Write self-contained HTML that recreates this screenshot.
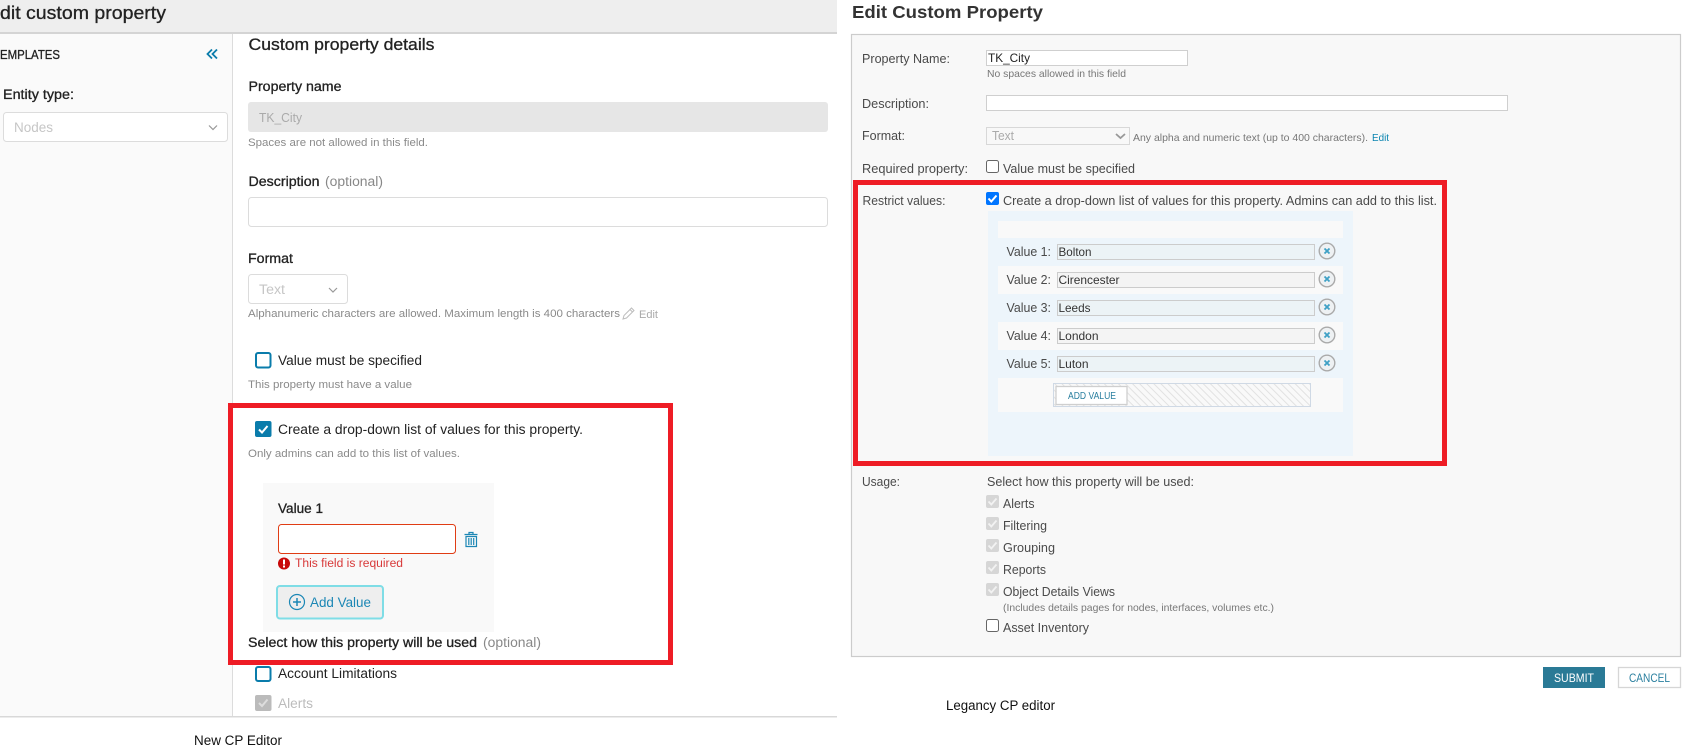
<!DOCTYPE html>
<html lang="en">
<head>
<meta charset="utf-8">
<title>Custom property editors</title>
<style>
html,body{margin:0;padding:0;background:#fff;width:1700px;height:756px;overflow:hidden}
svg{display:block}
text{font-family:"Liberation Sans",sans-serif;white-space:pre}
.b{stroke:currentColor;stroke-width:.3}
.l{font-size:13.5px;fill:#222;color:#222}
.h{font-size:11px;fill:#8a8a8a}
.r{font-size:12.5px;fill:#4a4a4a}
.s{font-size:10.5px;fill:#777}
</style>
</head>
<body>
<svg width="1700" height="756" viewBox="0 0 1700 756" xmlns="http://www.w3.org/2000/svg">
<defs>
<pattern id="hatch" width="5" height="5" patternUnits="userSpaceOnUse" patternTransform="rotate(45)">
<rect width="5" height="5" fill="#f9f9f9"/><rect width="5" height="1" fill="#e2e2e2"/>
</pattern>
</defs>
<rect width="1700" height="756" fill="#fff"/>

<!-- LEFT: new editor -->
<rect x="0" y="0" width="837" height="33" fill="#eeeeee"/>
<rect x="0" y="32" width="837" height="2" fill="#d4d4d4"/>
<rect x="0" y="34" width="232" height="682" fill="#fafafa"/>
<rect x="232" y="34" width="1" height="682" fill="#dcdcdc"/>
<rect x="0" y="716" width="837" height="1.5" fill="#d8d8d8"/>

<text x="0" y="19" font-size="18.5" fill="#222" color="#222" class="b" textLength="166" lengthAdjust="spacingAndGlyphs">dit custom property</text>
<text x="0" y="59" font-size="12.5" fill="#222" color="#222" class="b" textLength="60" lengthAdjust="spacingAndGlyphs">EMPLATES</text>
<path d="M212 49.500l-4.500 4.500 4.500 4.500M217 49.500l-4.500 4.500 4.500 4.500" fill="none" stroke="#0a7cab" stroke-width="1.800"/>
<text x="3" y="99" class="l b" textLength="71" lengthAdjust="spacingAndGlyphs">Entity type:</text>
<rect x="3.500" y="112.500" width="224" height="29" rx="3" fill="#fff" stroke="#dcdcdc"/>
<text x="14" y="132" font-size="13.500" fill="#c6c6c6" textLength="39" lengthAdjust="spacingAndGlyphs">Nodes</text>
<path d="M209 125.500l4 4 4-4" fill="none" stroke="#999" stroke-width="1.200"/>

<text x="248.500" y="50" font-size="17" fill="#222" color="#222" class="b" textLength="186" lengthAdjust="spacingAndGlyphs">Custom property details</text>
<text x="248.500" y="91" class="l b" textLength="93" lengthAdjust="spacingAndGlyphs">Property name</text>
<rect x="248" y="102" width="580" height="30" rx="3" fill="#e6e6e6"/>
<text x="259" y="122" font-size="13" fill="#aaa" textLength="43" lengthAdjust="spacingAndGlyphs">TK_City</text>
<text x="248" y="146" class="h" textLength="180" lengthAdjust="spacingAndGlyphs">Spaces are not allowed in this field.</text>
<text x="248.500" y="186" class="l b" textLength="71" lengthAdjust="spacingAndGlyphs">Description</text>
<text x="325" y="186" font-size="13.500" fill="#888" textLength="58" lengthAdjust="spacingAndGlyphs">(optional)</text>
<rect x="248.500" y="197.500" width="579" height="29" rx="3" fill="#fff" stroke="#dcdcdc"/>

<text x="248" y="263" class="l b" textLength="45" lengthAdjust="spacingAndGlyphs">Format</text>
<rect x="248.500" y="274.500" width="99" height="29" rx="3" fill="#fff" stroke="#dcdcdc"/>
<text x="259" y="294" font-size="13.500" fill="#c6c6c6" textLength="26" lengthAdjust="spacingAndGlyphs">Text</text>
<path d="M329 288l4 4 4-4" fill="none" stroke="#999" stroke-width="1.200"/>
<text x="248" y="317" class="h" textLength="372" lengthAdjust="spacingAndGlyphs">Alphanumeric characters are allowed. Maximum length is 400 characters</text>
<path d="M623 319l1-3.500 7.500-7.500 2.500 2.500-7.500 7.500zM630 309.500l2.500 2.500" fill="none" stroke="#bdbdbd" stroke-width="1"/>
<text x="639" y="318" font-size="11" fill="#aaa" textLength="19" lengthAdjust="spacingAndGlyphs">Edit</text>

<rect x="256" y="353" width="14.500" height="14.500" rx="2" fill="#fff" stroke="#0a7cab" stroke-width="2"/>
<text x="278" y="365" font-size="13.500" fill="#222" textLength="144" lengthAdjust="spacingAndGlyphs">Value must be specified</text>
<text x="248" y="388" class="h" textLength="164" lengthAdjust="spacingAndGlyphs">This property must have a value</text>

<rect x="255" y="421" width="16.500" height="16" rx="2" fill="#0a7cab"/>
<path d="M259 429.500l3 3 5.500-6.500" fill="none" stroke="#fff" stroke-width="2"/>
<text x="278" y="434" font-size="13.500" fill="#222" textLength="305" lengthAdjust="spacingAndGlyphs">Create a drop-down list of values for this property.</text>
<text x="248" y="457" class="h" textLength="212" lengthAdjust="spacingAndGlyphs">Only admins can add to this list of values.</text>

<rect x="263" y="483" width="231" height="149" fill="#f9f9f9"/>
<text x="278" y="513" class="l b" textLength="45" lengthAdjust="spacingAndGlyphs">Value 1</text>
<rect x="278.500" y="524.500" width="177" height="29" rx="3" fill="#fff" stroke="#e03c14"/>
<g fill="none" stroke="#1c87b5" stroke-width="1.200">
<path d="M464.500 534.500h13M469 534.500v-2h4v2M466 536.500h10.500v10H466z"/>
<path d="M468.800 538v7M471.200 538v7M473.700 538v7"/>
</g>
<circle cx="284" cy="563.500" r="6" fill="#c80808"/>
<rect x="283" y="559.500" width="2" height="5" fill="#fff"/>
<rect x="283" y="565.500" width="2" height="2" fill="#fff"/>
<text x="295" y="567" font-size="11.500" fill="#d83a3a" textLength="108" lengthAdjust="spacingAndGlyphs">This field is required</text>
<rect x="277" y="586" width="106" height="32.500" rx="3" fill="#eeeeee" stroke="#7fdde6" stroke-width="2"/>
<circle cx="297" cy="602" r="7.500" fill="none" stroke="#1c87b5" stroke-width="1.200"/>
<path d="M293 602h8M297 598v8" stroke="#1c87b5" stroke-width="1.500"/>
<text x="310" y="607" font-size="13.500" fill="#1c87b5" textLength="61" lengthAdjust="spacingAndGlyphs">Add Value</text>

<text x="248" y="647" class="l b" textLength="229" lengthAdjust="spacingAndGlyphs">Select how this property will be used</text>
<text x="483" y="647" font-size="13.500" fill="#888" textLength="58" lengthAdjust="spacingAndGlyphs">(optional)</text>
<rect x="256" y="667" width="14.500" height="14" rx="2" fill="#fff" stroke="#0a7cab" stroke-width="2"/>
<text x="278" y="678" font-size="13.500" fill="#222" textLength="119" lengthAdjust="spacingAndGlyphs">Account Limitations</text>
<rect x="255" y="695" width="16.500" height="16" rx="2" fill="#bbb"/>
<path d="M259 703l3 3 5.500-6.500" fill="none" stroke="#ddd" stroke-width="2"/>
<text x="278" y="708" font-size="13.500" fill="#bcbcbc" textLength="35" lengthAdjust="spacingAndGlyphs">Alerts</text>
<text x="194" y="745" font-size="13.500" fill="#111" textLength="88" lengthAdjust="spacingAndGlyphs">New CP Editor</text>

<!-- left red frame -->
<rect x="230.500" y="405.500" width="440" height="257" fill="none" stroke="#ee1c25" stroke-width="5"/>

<!-- RIGHT: legacy editor -->
<text x="852" y="18" font-size="17.500" font-weight="bold" fill="#333" textLength="191" lengthAdjust="spacingAndGlyphs">Edit Custom Property</text>
<rect x="851.500" y="34.500" width="829" height="622" fill="#f8f8f8" stroke="#cccccc" stroke-width="1.200"/>

<text x="862" y="63" class="r" textLength="88" lengthAdjust="spacingAndGlyphs">Property Name:</text>
<rect x="986.500" y="50.500" width="201" height="15" fill="#fff" stroke="#cfcfcf"/>
<text x="988" y="62" font-size="12" fill="#222" textLength="42" lengthAdjust="spacingAndGlyphs">TK_City</text>
<text x="987" y="77" class="s" textLength="139" lengthAdjust="spacingAndGlyphs">No spaces allowed in this field</text>

<text x="862" y="108" class="r" textLength="67" lengthAdjust="spacingAndGlyphs">Description:</text>
<rect x="986.500" y="95.500" width="521" height="15" fill="#fff" stroke="#cfcfcf"/>

<text x="862" y="140" class="r" textLength="43" lengthAdjust="spacingAndGlyphs">Format:</text>
<rect x="986.500" y="127.500" width="143" height="17" fill="#f8f8f8" stroke="#d8d8d8"/>
<text x="992" y="140" font-size="13" fill="#aaa" textLength="22" lengthAdjust="spacingAndGlyphs">Text</text>
<path d="M1116 134l4.500 4 4.500-4" fill="none" stroke="#999" stroke-width="1.800"/>
<text x="1133" y="141" class="s" textLength="235" lengthAdjust="spacingAndGlyphs">Any alpha and numeric text (up to 400 characters).</text>
<text x="1372" y="141" font-size="10.500" fill="#0a84b0" textLength="17" lengthAdjust="spacingAndGlyphs">Edit</text>

<text x="862" y="173" class="r" textLength="106" lengthAdjust="spacingAndGlyphs">Required property:</text>
<rect x="986.500" y="160.500" width="12" height="12" rx="2" fill="#fff" stroke="#666"/>
<text x="1003" y="173" class="r" textLength="132" lengthAdjust="spacingAndGlyphs">Value must be specified</text>

<text x="862.500" y="205" class="r" textLength="83" lengthAdjust="spacingAndGlyphs">Restrict values:</text>
<rect x="986" y="192" width="13" height="13" rx="2" fill="#0075ff"/>
<path d="M988.500 198.500l2.800 3 5.200-6" fill="none" stroke="#fff" stroke-width="2"/>
<text x="1003" y="205" class="r" textLength="434" lengthAdjust="spacingAndGlyphs">Create a drop-down list of values for this property. Admins can add to this list.</text>

<rect x="988" y="211" width="365" height="245" fill="#edf5fb"/>
<rect x="998" y="221" width="345" height="17" fill="#f9f9f9"/>
<rect x="998" y="266" width="345" height="28" fill="#f9f9f9"/>
<rect x="998" y="322" width="345" height="28" fill="#f9f9f9"/>
<rect x="998" y="378" width="345" height="34" fill="#f9f9f9"/>

<text x="1006.500" y="256" class="r" textLength="44.500" lengthAdjust="spacingAndGlyphs">Value 1:</text>
<text x="1006.500" y="284" class="r" textLength="44.500" lengthAdjust="spacingAndGlyphs">Value 2:</text>
<text x="1006.500" y="312" class="r" textLength="44.500" lengthAdjust="spacingAndGlyphs">Value 3:</text>
<text x="1006.500" y="340" class="r" textLength="44.500" lengthAdjust="spacingAndGlyphs">Value 4:</text>
<text x="1006.500" y="368" class="r" textLength="44.500" lengthAdjust="spacingAndGlyphs">Value 5:</text>
<g stroke="#cccccc">
<rect x="1057.500" y="244.500" width="257" height="15" fill="#ecf3f6"/>
<rect x="1057.500" y="272.500" width="257" height="15" fill="#f4f4f4"/>
<rect x="1057.500" y="300.500" width="257" height="15" fill="#ecf3f6"/>
<rect x="1057.500" y="328.500" width="257" height="15" fill="#f4f4f4"/>
<rect x="1057.500" y="356.500" width="257" height="15" fill="#ecf3f6"/>
</g>
<g font-size="12" fill="#333">
<text x="1058.500" y="256" textLength="33" lengthAdjust="spacingAndGlyphs">Bolton</text>
<text x="1058.500" y="284" textLength="61" lengthAdjust="spacingAndGlyphs">Cirencester</text>
<text x="1058.500" y="312" textLength="32" lengthAdjust="spacingAndGlyphs">Leeds</text>
<text x="1058.500" y="340" textLength="40" lengthAdjust="spacingAndGlyphs">London</text>
<text x="1058.500" y="368" textLength="30" lengthAdjust="spacingAndGlyphs">Luton</text>
</g>
<g fill="#eef1f3" stroke="#aaaaaa" stroke-width="1.400">
<circle cx="1327" cy="251" r="7.800"/><circle cx="1327" cy="279" r="7.800"/><circle cx="1327" cy="307" r="7.800"/><circle cx="1327" cy="335" r="7.800"/><circle cx="1327" cy="363" r="7.800"/>
</g>
<g fill="none" stroke="#3ea0c5" stroke-width="1.800">
<path d="M1324.500 248.500l5 5M1329.500 248.500l-5 5"/>
<path d="M1324.500 276.500l5 5M1329.500 276.500l-5 5"/>
<path d="M1324.500 304.500l5 5M1329.500 304.500l-5 5"/>
<path d="M1324.500 332.500l5 5M1329.500 332.500l-5 5"/>
<path d="M1324.500 360.500l5 5M1329.500 360.500l-5 5"/>
</g>
<rect x="1053.500" y="383.500" width="257" height="23" fill="url(#hatch)" stroke="#cfd9e5"/>
<rect x="1056" y="386.500" width="71" height="18" fill="#fff" stroke="#cfcfcf" stroke-width="1.300"/>
<text x="1068" y="399" font-size="10.500" fill="#2a7f9f" textLength="48" lengthAdjust="spacingAndGlyphs">ADD VALUE</text>

<!-- right red frame -->
<rect x="855.500" y="182.500" width="589" height="281" fill="none" stroke="#ee1c25" stroke-width="5"/>

<text x="862" y="486" class="r" textLength="38" lengthAdjust="spacingAndGlyphs">Usage:</text>
<text x="987" y="486" class="r" textLength="207" lengthAdjust="spacingAndGlyphs">Select how this property will be used:</text>
<g fill="#d6d6d6">
<rect x="986" y="495" width="13" height="13" rx="2"/><rect x="986" y="517" width="13" height="13" rx="2"/><rect x="986" y="539" width="13" height="13" rx="2"/><rect x="986" y="561" width="13" height="13" rx="2"/><rect x="986" y="583" width="13" height="13" rx="2"/>
</g>
<g fill="none" stroke="#f2f2f2" stroke-width="1.800">
<path d="M988.500 501.500l2.800 3 5.200-6"/><path d="M988.500 523.500l2.800 3 5.200-6"/><path d="M988.500 545.500l2.800 3 5.200-6"/><path d="M988.500 567.500l2.800 3 5.200-6"/><path d="M988.500 589.500l2.800 3 5.200-6"/>
</g>
<text x="1003" y="508" class="r" textLength="31.500" lengthAdjust="spacingAndGlyphs">Alerts</text>
<text x="1003" y="530" class="r" textLength="44" lengthAdjust="spacingAndGlyphs">Filtering</text>
<text x="1003" y="552" class="r" textLength="52" lengthAdjust="spacingAndGlyphs">Grouping</text>
<text x="1003" y="574" class="r" textLength="43" lengthAdjust="spacingAndGlyphs">Reports</text>
<text x="1003" y="596" class="r" textLength="112" lengthAdjust="spacingAndGlyphs">Object Details Views</text>
<text x="1003" y="611" class="s" textLength="271" lengthAdjust="spacingAndGlyphs">(Includes details pages for nodes, interfaces, volumes etc.)</text>
<rect x="986.500" y="619.500" width="12" height="12" rx="2" fill="#fff" stroke="#666"/>
<text x="1003" y="632" class="r" textLength="86" lengthAdjust="spacingAndGlyphs">Asset Inventory</text>

<rect x="1543" y="667" width="62" height="21" fill="#2a7a96"/>
<text x="1554" y="682" font-size="11.500" fill="#fff" textLength="40" lengthAdjust="spacingAndGlyphs">SUBMIT</text>
<rect x="1618.500" y="667.500" width="62" height="20" fill="#fff" stroke="#d6d6d6" stroke-width="1.300"/>
<text x="1629" y="682" font-size="11.500" fill="#2a7f9f" textLength="41" lengthAdjust="spacingAndGlyphs">CANCEL</text>

<text x="946" y="710" font-size="13.500" fill="#111" textLength="109" lengthAdjust="spacingAndGlyphs">Legancy CP editor</text>
</svg>
</body>
</html>
